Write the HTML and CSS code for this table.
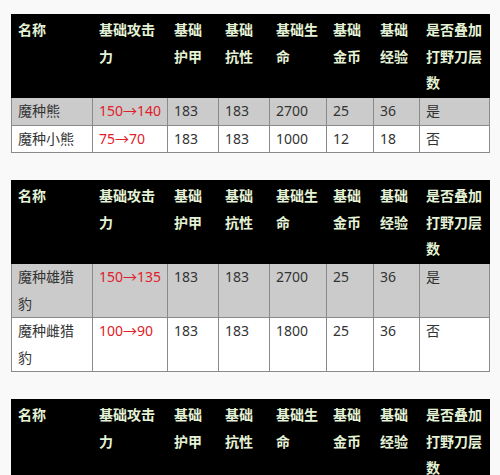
FILE: index.html
```html
<!DOCTYPE html>
<html lang="zh">
<head>
<meta charset="utf-8">
<link rel="stylesheet" href="styles.css">
</head>
<body>
<div class="page">
  <table class="stats">
    <colgroup>
      <col class="c-name"><col class="c-atk"><col class="c-n"><col class="c-n"><col class="c-hp"><col class="c-g"><col class="c-x"><col class="c-stack">
    </colgroup>
    <thead>
      <tr><th>名称</th><th>基础攻击力</th><th>基础护甲</th><th>基础抗性</th><th>基础生命</th><th>基础金币</th><th>基础经验</th><th>是否叠加打野刀层数</th></tr>
    </thead>
    <tbody>
      <tr class="shade"><td>魔种熊</td><td class="red">150→140</td><td>183</td><td>183</td><td>2700</td><td>25</td><td>36</td><td>是</td></tr>
      <tr><td>魔种小熊</td><td class="red">75→70</td><td>183</td><td>183</td><td>1000</td><td>12</td><td>18</td><td>否</td></tr>
    </tbody>
  </table>

  <table class="stats">
    <colgroup>
      <col class="c-name"><col class="c-atk"><col class="c-n"><col class="c-n"><col class="c-hp"><col class="c-g"><col class="c-x"><col class="c-stack">
    </colgroup>
    <thead>
      <tr><th>名称</th><th>基础攻击力</th><th>基础护甲</th><th>基础抗性</th><th>基础生命</th><th>基础金币</th><th>基础经验</th><th>是否叠加打野刀层数</th></tr>
    </thead>
    <tbody>
      <tr class="shade"><td>魔种雄猎豹</td><td class="red">150→135</td><td>183</td><td>183</td><td>2700</td><td>25</td><td>36</td><td>是</td></tr>
      <tr><td>魔种雌猎豹</td><td class="red">100→90</td><td>183</td><td>183</td><td>1800</td><td>25</td><td>36</td><td>否</td></tr>
    </tbody>
  </table>

  <table class="stats">
    <colgroup>
      <col class="c-name"><col class="c-atk"><col class="c-n"><col class="c-n"><col class="c-hp"><col class="c-g"><col class="c-x"><col class="c-stack">
    </colgroup>
    <thead>
      <tr><th>名称</th><th>基础攻击力</th><th>基础护甲</th><th>基础抗性</th><th>基础生命</th><th>基础金币</th><th>基础经验</th><th>是否叠加打野刀层数</th></tr>
    </thead>
  </table>
</div>
</body>
</html>
```

FILE: styles.css
```css
html, body {
  margin: 0;
  padding: 0;
  background: #f9f9f9;
}
.page {
  padding: 14px 11px 0 11px;
  display: flex;
  flex-direction: column;
  gap: 27px;
  font-family: "Noto Sans", "Noto Sans CJK SC", sans-serif;
  font-size: 14px;
  color: #333;
}
.stats {
  width: 478px;
  border-collapse: collapse;
  table-layout: fixed;
  background: #fff;
}
.c-name { width: 81px; }
.c-atk { width: 75px; }
.c-n { width: 51px; }
.c-hp { width: 57px; }
.c-g { width: 47px; }
.c-x { width: 46px; }
.c-stack { width: 70px; }
.stats th,
.stats td {
  padding: 0 5px 0 6px;
  line-height: 26.5px;
  text-align: left;
  vertical-align: top;
  border: 1px solid #8a8a8a;
  word-break: break-all;
}
.stats th {
  background: #000;
  color: #e4f2d6;
  font-family: "Noto Sans CJK SC", sans-serif;
  font-weight: 700;
  border-color: #000;
  height: 81px;
  padding-top: 1px;
}
.stats td {
  font-weight: 400;
}
.stats .shade td {
  background: #cbcbcb;
}
.stats td.red {
  color: #e0202a;
}
```
